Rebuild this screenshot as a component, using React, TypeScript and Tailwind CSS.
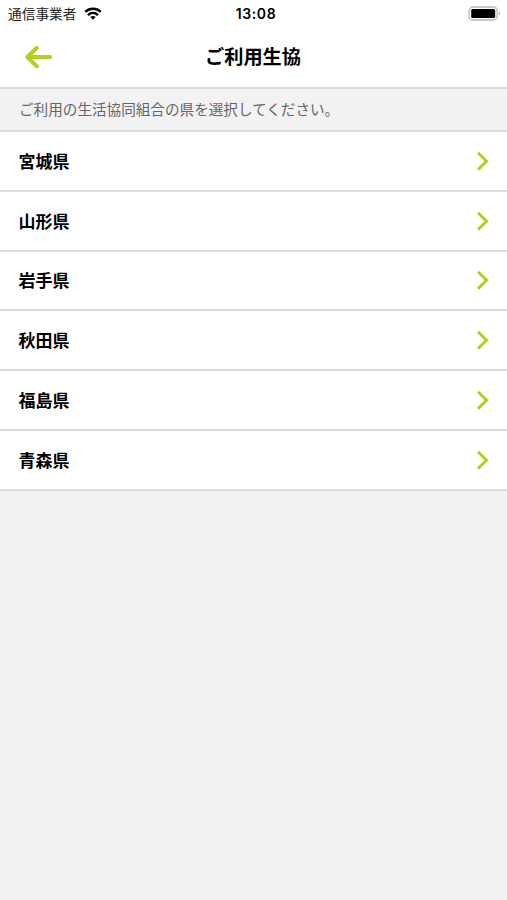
const prefectures = ['宮城県', '山形県', '岩手県', '秋田県', '福島県', '青森県'];

function WifiIcon() {
  return (
    <svg className="h-[13px] w-[18px]" viewBox="0 0 18 13" fill="none" stroke="#000" strokeWidth="2.5">
      <path d="M1.2 4.8C5.6 .7 12.4 .7 16.8 4.8" />
      <path d="M4 8.1C6.9 5.4 11.1 5.4 14 8.1" />
      <path d="M9 12.8 6.3 10.1C7.9 8.7 10.1 8.7 11.7 10.1Z" fill="#000" stroke="none" />
    </svg>
  );
}

function BatteryIcon() {
  return (
    <svg className="h-[15px] w-[33px]" viewBox="0 0 33 15" fill="none">
      <rect x="1.2" y="1" width="28" height="13" rx="4" stroke="#c8c8c8" strokeWidth="1.8" />
      <rect x="3.2" y="3" width="24" height="9" rx="1.6" fill="#000" />
      <path d="M30.9 5.7C32.3 6.3 32.3 8.7 30.9 9.3Z" fill="#999" />
    </svg>
  );
}

function BackArrow() {
  return (
    <svg
      className="h-6 w-7"
      viewBox="0 0 28 24"
      fill="none"
      stroke="#b0d11e"
      strokeWidth="4"
      strokeLinecap="round"
      strokeLinejoin="round"
    >
      <path d="M11.8 2.8 2.4 12l9.4 9.2M3 12h22.2" />
    </svg>
  );
}

function Chevron() {
  return (
    <svg className="h-5 w-[14px]" viewBox="0 0 14 20" fill="none" stroke="#b0d11e" strokeWidth="3">
      <path d="M2 1.8 10.5 10.2 2 18.6" />
    </svg>
  );
}

export default function App() {
  return (
    <div className="flex h-[900px] w-[507px] flex-col overflow-hidden bg-[#f2f2f2] font-['Noto_Sans_CJK_JP',sans-serif] text-black">
      <div className="grid h-[27px] shrink-0 grid-cols-3 items-center bg-white">
        <div className="flex items-center gap-2 pl-2">
          <span className="text-[13.7px] leading-none whitespace-nowrap text-[#222]">通信事業者</span>
          <WifiIcon />
        </div>
        <span className="pl-[5px] text-center font-['Inter',sans-serif] text-[14px] leading-none font-semibold tracking-[0.6px]">
          13:08
        </span>
        <div className="flex justify-end pr-[6px]">
          <BatteryIcon />
        </div>
      </div>
      <header className="grid h-[62px] shrink-0 grid-cols-[1fr_auto_1fr] items-center border-b-2 border-[#dcdcdc] bg-white">
        <button className="justify-self-start pl-[25px]" aria-label="戻る">
          <BackArrow />
        </button>
        <h1 className="pr-px text-[19.2px] leading-none font-bold">ご利用生協</h1>
      </header>
      <p className="flex h-[43px] shrink-0 items-center border-b-2 border-[#dcdcdc] pl-[19px] text-[14.6px] leading-none text-[#666]">
        ご利用の生活協同組合の県を選択してください。
      </p>
      <ul>
        {prefectures.map((name) => (
          <li
            key={name}
            className="flex h-[59.75px] items-center justify-between border-b-2 border-[#dcdcdc] bg-white pr-[17px] pl-[18.5px]"
          >
            <span className="pb-px text-[17px] leading-none font-bold">{name}</span>
            <Chevron />
          </li>
        ))}
      </ul>
    </div>
  );
}
